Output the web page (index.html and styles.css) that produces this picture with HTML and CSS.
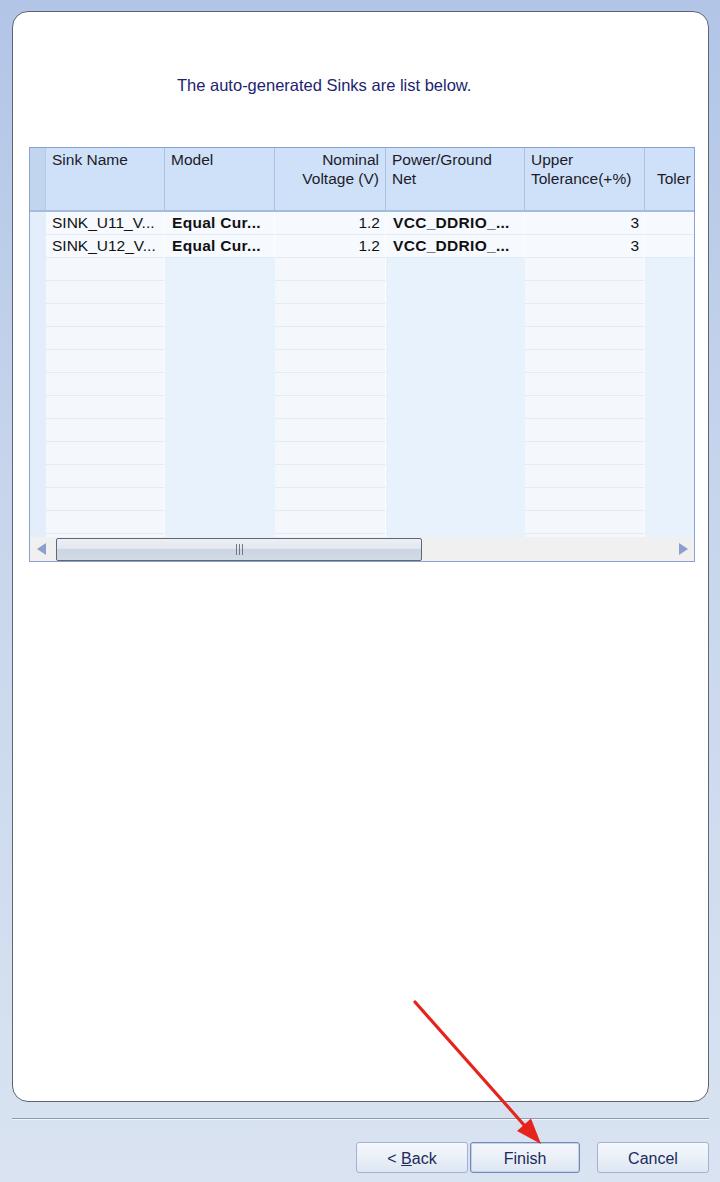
FILE: index.html
```html
<!DOCTYPE html>
<html lang="en">
<head>
  <meta charset="UTF-8">
  <title>Sink Wizard</title>
  <link rel="stylesheet" href="styles.css">
</head>
<body>
  <div id="panel">
    <p class="intro">The auto-generated Sinks are list below.</p>
    <div id="grid">
      <div class="head row">
        <div class="rh"></div>
        <div class="hc">Sink Name</div>
        <div class="hc">Model</div>
        <div class="hc right">Nominal<br>Voltage (V)</div>
        <div class="hc">Power/Ground<br>Net</div>
        <div class="hc">Upper<br>Tolerance(+%)</div>
        <div class="hc last"><br>Toler</div>
      </div>
      <div id="body">
        <div class="row data">
          <div class="rh"></div>
          <div class="c">SINK_U11_V...</div>
          <div class="c b">Equal Cur...</div>
          <div class="c right">1.2</div>
          <div class="c b">VCC_DDRIO_...</div>
          <div class="c right">3</div>
          <div class="c"></div>
        </div>
        <div class="row data">
          <div class="rh"></div>
          <div class="c">SINK_U12_V...</div>
          <div class="c b">Equal Cur...</div>
          <div class="c right">1.2</div>
          <div class="c b">VCC_DDRIO_...</div>
          <div class="c right">3</div>
          <div class="c"></div>
        </div>
      </div>
      <div class="hscroll">
        <span class="arr left"></span>
        <div class="track">
          <div class="thumb"><span class="grip"></span></div>
        </div>
        <span class="arr righta"></span>
      </div>
    </div>
  </div>
  <div class="sep"></div>
  <div class="buttons">
    <button class="btn">&lt; <u>B</u>ack</button>
    <button class="btn def">Finish</button>
    <button class="btn cancel">Cancel</button>
  </div>

  <svg class="arrow" width="720" height="1182" viewBox="0 0 720 1182">
    <line x1="415" y1="1002" x2="524" y2="1125" stroke="#e5241b" stroke-width="3.2" stroke-linecap="round"/>
    <polygon points="541,1144 517,1131 531,1118.5" fill="#e5241b"/>
  </svg>

  <script>
    // pad the grid with empty rows
    const body = document.getElementById('body')
    for (let i = 0; i < 13; i++) {
      const row = document.createElement('div')
      row.className = 'row empty'
      row.innerHTML = '<div class="rh"></div><div class="c"></div><div class="c dk"></div><div class="c"></div><div class="c dk"></div><div class="c"></div><div class="c dk"></div>'
      body.appendChild(row)
    }
  </script>
</body>
</html>
```

FILE: styles.css
```css
* {
  margin: 0;
  padding: 0;
  box-sizing: border-box;
}

body {
  width: 720px;
  height: 1182px;
  overflow: hidden;
  position: relative;
  font-family: "Liberation Sans", Arial, sans-serif;
  font-size: 15.5px;
  background: linear-gradient(#b2c5e7 0%, #c6d5ec 40%, #d9e3f1 100%);
  padding-top: 11px;
}

#panel {
  margin-left: 12px;
  width: 697px;
  height: 1091px;
  background: #fff;
  border: 1px solid #5d6472;
  border-radius: 16px;
  padding-top: 64px;
}

.intro {
  margin-left: 164px;
  font-size: 16.5px;
  line-height: 18px;
  color: #1d2470;
}

#grid {
  margin: 53px 0 0 16px;
  width: 666px;
  border: 1px solid #8aa2cf;
  overflow: hidden;
}

.row {
  display: grid;
  grid-template-columns: 16px 119px 110px 111px 139px 120px 120px;
  width: 735px;
}

.head {
  height: 64px;
  background: #cfe1f8;
  border-bottom: 2px solid #a4bbdb;
  color: #1b1b2a;
}

.head .rh {
  background: #c2d5ee;
  border-right: 1px solid #b4c9e6;
}

.hc {
  line-height: 19px;
  padding: 2px 6px 0 6px;
  border-right: 1px solid #aec3e0;
  white-space: nowrap;
  overflow: hidden;
}

.hc.last {
  padding-left: 12px;
  border-right: none;
}

.right {
  text-align: right;
}

#body {
  height: 325px;
  overflow: hidden;
}

.data,
.empty {
  height: 23px;
}

.row .c {
  line-height: 22px;
  padding: 0 5px 0 6px;
  white-space: nowrap;
  overflow: hidden;
  color: #111;
  background: #f4f8fd;
  border-bottom: 1px solid #e4ebf5;
  border-right: 1px solid #fbfdff;
}

.row .c:nth-child(3),
.row .c:nth-child(5) {
  padding-left: 7px;
}

.data .c {
  background: #f6f9fd;
}

.c.b {
  font-weight: bold;
  letter-spacing: 0.3px;
}

.row .c.dk {
  background: #e8f2fd;
  border-bottom-color: #e8f2fd;
  border-right-color: #e8f2fd;
}

#body .rh {
  background: #e4eefb;
}

.hscroll {
  height: 24px;
  background: #f0f0f0;
  display: flex;
  align-items: center;
  position: relative;
}

.arr {
  width: 0;
  height: 0;
  border-top: 6px solid transparent;
  border-bottom: 6px solid transparent;
}

.arr.left {
  margin-left: 7px;
  border-right: 9px solid #8d9fcf;
}

.arr.righta {
  margin-left: auto;
  margin-right: 6px;
  border-left: 9px solid #8d9fcf;
}

.track {
  margin-left: 10px;
  width: 366px;
  height: 23px;
}

.thumb {
  width: 366px;
  height: 23px;
  border: 1px solid #5f6676;
  border-radius: 2px;
  background: linear-gradient(#eceff5 0%, #e3e8ef 45%, #ccd5e2 50%, #d2dae6 100%);
  display: flex;
  justify-content: center;
  align-items: center;
}

.grip {
  width: 7px;
  height: 11px;
  border-left: 1px solid #707888;
  border-right: 1px solid #707888;
  position: relative;
}

.grip::after {
  content: "";
  position: absolute;
  left: 2px;
  top: 0;
  width: 1px;
  height: 11px;
  background: #707888;
}

.sep {
  margin: 16px 0 0 12px;
  width: 697px;
  height: 2px;
  border-top: 1px solid #8e9ab0;
  border-bottom: 1px solid #f2f5fa;
}

.buttons {
  display: flex;
  justify-content: flex-end;
  padding-right: 11px;
  margin-top: 22px;
}

.btn {
  width: 112px;
  height: 31px;
  padding-top: 2px;
  font-family: "Liberation Sans", Arial, sans-serif;
  font-size: 16px;
  color: #1c2a5c;
  border: 1px solid #a3b2cf;
  border-radius: 3px;
  background: linear-gradient(#f5f8fc 0%, #eaf0f8 50%, #dde6f2 100%);
  margin-left: 2px;
}

.btn.def {
  width: 110px;
  border-color: #7489b3;
  box-shadow: inset 0 0 0 1px #c2d1ea;
}

.btn.cancel {
  margin-left: 17px;
}

.arrow {
  position: absolute;
  left: 0;
  top: 0;
  pointer-events: none;
}
```
